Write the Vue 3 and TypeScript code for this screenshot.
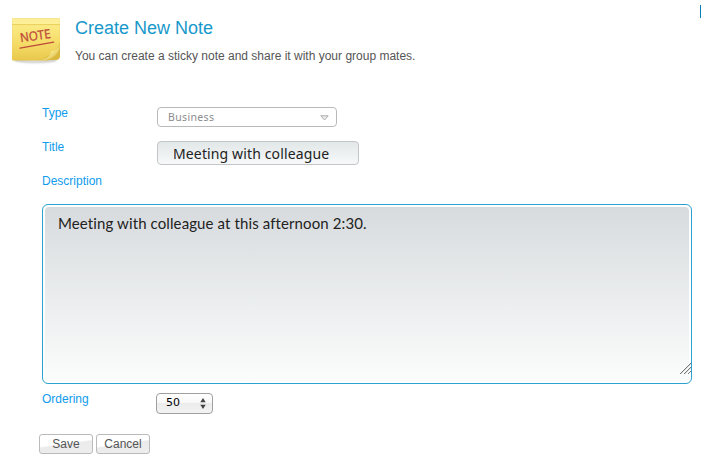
<script setup lang="ts">
import { ref } from 'vue'

const noteType = ref('Business')
const title = ref('Meeting with colleague')
const description = ref('Meeting with colleague at this afternoon 2:30.')
const ordering = ref(50)
</script>

<template>
  <main class="page">
    <header class="head">
      <svg class="note-icon" width="52" height="54" viewBox="0 0 52 54">
        <defs>
          <linearGradient id="paper" x1="0" y1="0" x2="0" y2="1">
            <stop offset="0" stop-color="#f5de70" />
            <stop offset="0.2" stop-color="#fae982" />
            <stop offset="0.6" stop-color="#f5dc68" />
            <stop offset="1" stop-color="#e9c94d" />
          </linearGradient>
          <linearGradient id="curl" x1="0" y1="0" x2="1" y2="1">
            <stop offset="0" stop-color="#fff6ae" />
            <stop offset="0.5" stop-color="#f8e88a" />
            <stop offset="1" stop-color="#cfab35" />
          </linearGradient>
          <filter id="soft" x="-10%" y="-100%" width="120%" height="300%">
            <feGaussianBlur stdDeviation="0.9" />
          </filter>
        </defs>
        <path d="M5 48 Q24 52 46 48 L46 50 Q24 53 5 50Z" fill="#777" opacity="0.6" filter="url(#soft)" />
        <path d="M2.3 7.4 H49.7 L50 37 C49 43 44 49 38 49.5 H2.3Z" fill="#e2bf45" />
        <path d="M2.3 7.4 H49.7 L50 37 C49 43 44 48 37 48.7 H2.3Z" fill="url(#paper)" />
        <path d="M2.3 7.6 H49.7 V13 H2.3Z" fill="#fff3a3" opacity="0.75" />
        <path d="M2.3 13.5 H49.7" stroke="#e6c955" stroke-width="1" opacity="0.7" />
        <path d="M50 31 C48 39 42 43 31 49 H47 Q49.5 48.5 50 46Z" fill="#dab83e" />
        <path d="M50 33 C47.5 39.5 44 40 41 40.5 C41 44.5 36 48 31 49 C42 49 49 45 50 33Z" fill="url(#curl)" />
        <text class="note-word" x="10.8" y="31.2" transform="rotate(-8 11 31)" textLength="30.5" lengthAdjust="spacingAndGlyphs">NOTE</text>
        <path d="M10 37.2 L43.7 31.2" fill="none" stroke="#bd493a" stroke-width="1.2" stroke-linecap="round" />
      </svg>
      <div class="head-text">
        <h1>Create New Note</h1>
        <p>You can create a sticky note and share it with your group mates.</p>
      </div>
      <span class="edge-tab"></span>
    </header>

    <form class="form" @submit.prevent>
      <div class="row">
        <label>Type</label>
        <div class="type-select">
          <span>{{ noteType }}</span>
          <svg width="9" height="6" viewBox="0 0 9 6">
            <path d="M0.8 0.8 H8.2 L4.5 5Z" fill="#eee" stroke="#aaa" stroke-width="1" />
          </svg>
        </div>
      </div>
      <div class="row">
        <label>Title</label>
        <input v-model="title" class="title-input" type="text" />
      </div>
      <div class="row desc-row"><label>Description</label></div>
      <div class="area">
        <textarea v-model="description" spellcheck="false"></textarea>
        <svg class="grip" width="12" height="12" viewBox="0 0 12 12" shape-rendering="crispEdges">
          <path d="M0.5 11.5 L11.5 0.5 M4.5 11.5 L11.5 4.5 M8.5 11.5 L11.5 8.5" stroke="#777" />
          <path d="M1.5 11.5 L11.5 1.5 M5.5 11.5 L11.5 5.5" stroke="#ddd" />
        </svg>
      </div>
      <div class="row order-row">
        <label>Ordering</label>
        <div class="order-select">
          <span>{{ ordering }}</span>
          <svg width="6" height="11" viewBox="0 0 6 11">
            <path d="M3 0 L5.7 4.2 H0.3Z M3 11 L5.7 6.8 H0.3Z" fill="#444" />
          </svg>
        </div>
      </div>
      <div class="actions">
        <button type="submit">Save</button>
        <button type="button">Cancel</button>
      </div>
    </form>
  </main>
</template>

<style>
body {
  background: #fff;
}
</style>

<style scoped>
* {
  box-sizing: border-box;
}
.page {
  width: 701px;
  height: 461px;
  overflow: hidden;
  background: #fff;
  font-family: "Liberation Sans", Arial, sans-serif;
  font-size: 12px;
}
.head {
  position: relative;
  display: flex;
  height: 104px;
  padding: 11px 0 0 10px;
}
.note-icon {
  flex: none;
}
.note-word {
  font: 400 12.5px "Open Sans", sans-serif;
  fill: #bd493a;
  stroke: #bd493a;
  stroke-width: 0.35px;
}
.head-text {
  padding: 6px 0 0 13px;
}
h1 {
  margin: 0;
  font-size: 18px;
  line-height: 22px;
  font-weight: 400;
  color: #1898ca;
}
p {
  margin: 9px 0 0;
  line-height: 16px;
  color: #555;
}
.edge-tab {
  position: absolute;
  right: 0;
  top: 5px;
  width: 1px;
  height: 13px;
  background: #087fb3;
}
.form {
  padding-left: 42px;
}
.row {
  display: flex;
  height: 34px;
}
label {
  width: 115px;
  line-height: 18px;
  color: #109bed;
}
.type-select {
  display: flex;
  align-items: center;
  justify-content: space-between;
  width: 180px;
  height: 20px;
  margin-top: 3px;
  padding: 0 7px 0 10px;
  border: 1px solid #b9b9b9;
  border-radius: 4px;
  font: 10.5px "Noto Sans", sans-serif;
  letter-spacing: 0.35px;
  color: #8c8c8c;
}
.type-select span {
  margin-top: -1px;
}
.type-select svg {
  margin-top: 1px;
}
.title-input {
  width: 202px;
  height: 24px;
  margin: 3px 0 0;
  padding: 1px 15px 0;
  border: 1px solid #c3c6c8;
  border-radius: 4px;
  outline: 0;
  background: linear-gradient(#e2e7e8, #f7f9f9);
  font: 14px "Noto Sans", sans-serif;
  letter-spacing: 0.13px;
  color: #222;
}
.desc-row {
  height: 32px;
}
.area {
  position: relative;
  width: 650px;
  height: 180px;
  padding: 2px;
  border: 1px solid #2ba2d1;
  border-radius: 6px;
}
textarea {
  display: block;
  width: 100%;
  height: 100%;
  margin: 0;
  padding: 7px 13px;
  border: 0;
  border-radius: 4px;
  outline: 0;
  resize: none;
  background: linear-gradient(#d8dbde, #fbfdfc);
  font: 15px/18px Lato, sans-serif;
  font-variant-ligatures: none;
  letter-spacing: 0.11px;
  color: #222;
}
.grip {
  position: absolute;
  right: 0;
  bottom: 8px;
}
.order-row {
  height: 50px;
  padding-top: 6px;
}
.order-select {
  display: flex;
  align-items: center;
  justify-content: space-between;
  width: 57px;
  height: 21px;
  margin: 3px 0 0 -1px;
  padding: 0 6px 1px 9px;
  border: 1px solid #a0a0a0;
  border-radius: 4px;
  background: linear-gradient(#fff, #f7f7f7 50%, #ececec 50%, #f3f3f3);
  font: 11px "DejaVu Sans", sans-serif;
  color: #000;
}
.order-select span {
  margin-top: -1px;
}
.actions {
  display: flex;
  gap: 3px;
  margin-left: -3px;
}
button {
  width: 54px;
  height: 20px;
  padding: 0;
  border: 1px solid #bababa;
  border-radius: 3px;
  background: linear-gradient(172deg, #fff 46%, #ebebeb 52%, #eee);
  font: 12px "Liberation Sans", sans-serif;
  color: #555;
}
</style>
